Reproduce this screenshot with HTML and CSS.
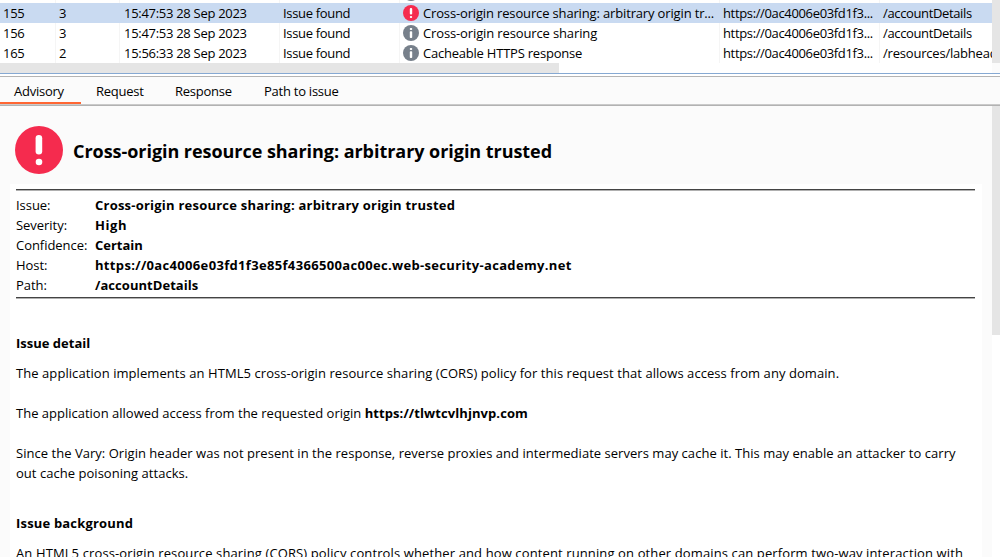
FILE: index.html
```html
<!DOCTYPE html>
<html lang="en">
<head>
<meta charset="utf-8">
<title>Issue activity</title>
<link rel="stylesheet" href="styles.css">
</head>
<body>
<svg class="defs" width="0" height="0">
  <symbol id="alert" viewBox="0 0 48 48"><circle cx="24" cy="24" r="24" fill="#f52b4e"/><rect x="20.6" y="9" width="6.6" height="19.6" rx="3.3" fill="#fff"/><circle cx="24" cy="36" r="3.3" fill="#fff"/></symbol>
  <symbol id="alert-small" viewBox="0 0 16 16"><circle cx="8" cy="8" r="8" fill="#f52b4e"/><rect x="6.8" y="3" width="2.4" height="6.5" rx="1" fill="#fff"/><rect x="6.8" y="11" width="2.4" height="2" rx="1" fill="#fff"/></symbol>
  <symbol id="info" viewBox="0 0 16 16"><circle cx="8" cy="8" r="8" fill="#77808b"/><rect x="6.8" y="3" width="2.4" height="2" rx=".8" fill="#fff"/><rect x="6.8" y="6.3" width="2.4" height="6.7" rx=".8" fill="#fff"/></symbol>
</svg>
<div class="app">
  <section class="issues">
    <div class="rows">
      <div class="row clipped"><div></div><div></div><div></div><div></div><div><svg class="icon"><use href="#info"/></svg></div><div></div><div></div></div>
      <div class="row selected"><div><span class="id">155</span></div><div>3</div><div><span class="time">15:47:53 28 Sep 2023</span></div><div><span class="type">Issue found</span></div><div><svg class="icon"><use href="#alert-small"/></svg><span class="n1">Cross-origin resource sharing: arbitrary origin tr...</span></div><div><span class="host">https://0ac4006e03fd1f3...</span></div><div><span class="path">/accountDetails</span></div></div>
      <div class="row"><div><span class="id">156</span></div><div>3</div><div><span class="time">15:47:53 28 Sep 2023</span></div><div><span class="type">Issue found</span></div><div><svg class="icon"><use href="#info"/></svg><span class="n2">Cross-origin resource sharing</span></div><div><span class="host">https://0ac4006e03fd1f3...</span></div><div><span class="path">/accountDetails</span></div></div>
      <div class="row"><div><span class="id">165</span></div><div>2</div><div><span class="time">15:56:33 28 Sep 2023</span></div><div><span class="type">Issue found</span></div><div><svg class="icon"><use href="#info"/></svg><span class="n3">Cacheable HTTPS response</span></div><div><span class="host">https://0ac4006e03fd1f3...</span></div><div><span class="path long">/resources/labhead</span></div></div>
      <div class="hscroll"><div class="hthumb"></div></div>
    </div>
    <div class="vscroll"><div class="list-thumb"></div></div>
  </section>
  <div class="splitter"></div>
  <nav class="tabs">
    <div class="tab active">Advisory</div>
    <div class="tab t2">Request</div>
    <div class="tab t3">Response</div>
    <div class="tab t4">Path to issue</div>
  </nav>
  <section class="detail">
    <div class="pane">
      <header class="title"><svg class="big"><use href="#alert"/></svg><h1>Cross-origin resource sharing: arbitrary origin trusted</h1></header>
      <article class="doc">
        <div class="rule"></div>
        <div class="summary">
          <div class="k">Issue:</div><div><b class="b1">Cross-origin resource sharing: arbitrary origin trusted</b></div>
          <div class="k">Severity:</div><div><b class="b3">High</b></div>
          <div class="k">Confidence:</div><div><b>Certain</b></div>
          <div class="k">Host:</div><div><b class="b2">https://0ac4006e03fd1f3e85f4366500ac00ec.web-security-academy.net</b></div>
          <div class="k">Path:</div><div><b class="b4">/accountDetails</b></div>
        </div>
        <div class="rule"></div>
        <h2>Issue detail</h2>
        <p class="p1">The application implements an HTML5 cross-origin resource sharing (CORS) policy for this request that allows access from any domain.</p>
        <p class="p2">The application allowed access from the requested origin <b>https://tlwtcvlhjnvp.com</b></p>
        <p class="p3">Since the Vary: Origin header was not present in the response, reverse proxies and intermediate servers may cache it. This may enable an attacker to carry<br>out cache poisoning attacks.</p>
        <h2 class="bg">Issue background</h2>
        <p class="p4">An HTML5 cross-origin resource sharing (CORS) policy controls whether and how content running on other domains can perform two-way interaction with</p>
      </article>
    </div>
    <div class="vscroll"><div class="detail-thumb"></div></div>
  </section>
</div>
</body>
</html>
```
FILE: styles.css
```css
* { box-sizing: border-box; }
body { margin: 0; background: #fff; color: #000; font: 13px/20px "Open Sans", "Noto Sans", sans-serif; overflow: hidden; }
.defs { display: block; height: 0; }
.app { height: 557px; display: flex; flex-direction: column; overflow: hidden; }
.issues { display: flex; height: 73px; flex: none; }
.rows { width: 992px; overflow: hidden; }
.row { display: grid; grid-template-columns: 56px 64px 160px 120px 320px 160px 112px; height: 20px; }
.row > div { display: flex; align-items: center; gap: 4px; padding-left: 3px; border-right: 1px solid #f5f5f5; white-space: nowrap; overflow: hidden; }
.row > div:last-child { border-right: 0; }
.clipped { height: 3px; }
.row.clipped > div { align-items: flex-end; }
.clipped .icon { margin-bottom: 2px; }
.selected { background: #c9daf1; }
.selected > div { border-right-color: #c9daf1; }
.icon { width: 16px; height: 16px; flex: none; }
.id { letter-spacing: -.3px; }
.time { letter-spacing: -.29px; padding-left: 1px; }
.type { letter-spacing: -.32px; }
.n1 { letter-spacing: -.15px; }
.n2 { letter-spacing: -.13px; }
.n3 { letter-spacing: -.22px; }
.host { letter-spacing: -.35px; }
.path { letter-spacing: -.36px; }
.path.long { letter-spacing: -.2px; }
.hscroll { height: 10px; background: #fff; }
.hthumb { width: 559px; height: 10px; background: #e5e5e5; }
.vscroll { width: 8px; flex: none; background: #fbfbfb; }
.list-thumb { height: 63px; background: #e5e5e5; }
.splitter { height: 4px; flex: none; border-top: 1px solid #86a9d3; border-bottom: 1px solid #b4b4b4; background: #fff; }
.tabs { height: 29px; flex: none; display: flex; background: #fbfbfb; border-bottom: 1px solid #b2b2b2; box-shadow: inset 0 -1px #cacaca; }
.tab { padding: 4px 0 0 15px; height: 27px; width: 81px; white-space: nowrap; letter-spacing: -.25px; }
.tab.active { padding-left: 14px; border-bottom: 2px solid #ff6633; }
.tab.t2 { width: 79px; }
.tab.t3 { width: 88px; }
.tab.t4 { padding-left: 16px; width: 110px; }
.detail { flex: 1; min-height: 0; display: flex; background: #fbfbfb; }
.pane { width: 992px; padding: 0 10px; overflow: hidden; }
.title { height: 78px; padding: 20px 0 0 5px; display: flex; gap: 10px; }
.big { width: 48px; height: 48px; flex: none; }
h1 { margin: 0; font-size: 18px; line-height: 50px; font-weight: 700; letter-spacing: -.045px; white-space: nowrap; }
.doc { height: 400px; background: #fff; padding: 5px 7px 0 6px; white-space: nowrap; }
.rule { height: 2px; background: #b0b0b0; border-top: 1px solid #444; }
.summary { display: grid; grid-template-columns: 79px 1fr; grid-auto-rows: 20px; height: 106px; padding-top: 4px; }
.k { letter-spacing: -.04px; }
b, h2 { font-weight: 700; }
.b1 { letter-spacing: .225px; }
.b2 { letter-spacing: .33px; }
.b3 { letter-spacing: .6px; }
.b4 { letter-spacing: .05px; }
h2 { margin: 34px 0 10px; font-size: 13px; line-height: 20px; }
h2.bg { letter-spacing: .18px; }
p { margin: 0 0 20px; }
p + h2 { margin-top: 30px; }
.p1 { letter-spacing: .068px; }
.p2 b { letter-spacing: .08px; }
.p3 { letter-spacing: .035px; }
.p4 { letter-spacing: .118px; }
.detail .vscroll { background: #fff; }
.detail-thumb { height: 229px; background: #e5e5e5; }
```
